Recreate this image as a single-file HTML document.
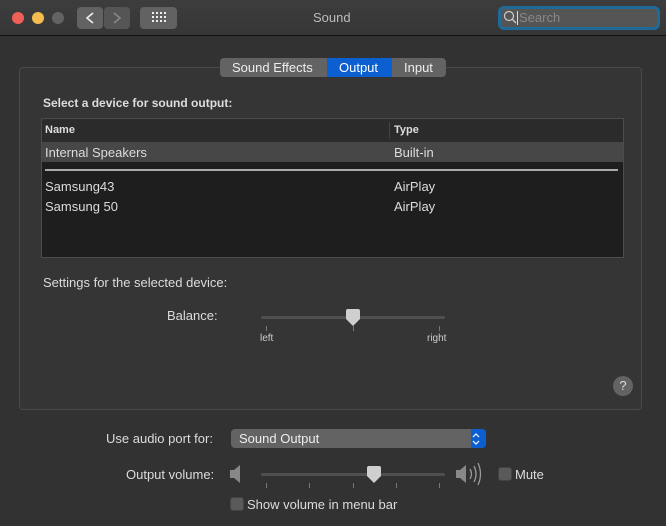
<!DOCTYPE html>
<html><head><style>
*{margin:0;padding:0;box-sizing:border-box}
body{width:666px;height:526px;background:#323232;font-family:"Liberation Sans",sans-serif;color:#dcdcdc;font-size:13px;position:relative;overflow:hidden}
.a{position:absolute;white-space:nowrap}
.tl{width:12px;height:12px;border-radius:50%;top:12px}
.btn{background:#626262;border-radius:4px}
.tick{position:absolute;width:1px;height:5px;background:#777}
.cb{width:14px;height:14px;border-radius:3px;background:#5a5a5a;border:1px solid #444}
</style></head><body>
<div class="a" style="left:0;top:0;width:666px;height:36px;background:linear-gradient(#3d3d3d,#363636);border-bottom:1px solid #111"></div>
<div class="a tl" style="left:12px;background:#ed5f57"></div>
<div class="a tl" style="left:32px;background:#f5bd4f"></div>
<div class="a tl" style="left:52px;background:#636363"></div>
<div class="a btn" style="left:77px;top:7px;width:26px;height:22px"></div>
<div class="a btn" style="left:104px;top:7px;width:26px;height:22px;background:#555"></div>
<svg class="a" style="left:77px;top:7px" width="53" height="22"><path d="M16 6 L10 11 L16 16" stroke="#eee" stroke-width="1.6" fill="none"/><path d="M37 6 L43 11 L37 16" stroke="#888" stroke-width="1.6" fill="none"/></svg>
<div class="a btn" style="left:140px;top:7px;width:37px;height:22px"></div>
<svg class="a" style="left:152px;top:12px" width="14" height="12" fill="#eee"><rect x="0" y="0" width="2" height="2"/><rect x="4" y="0" width="2" height="2"/><rect x="8" y="0" width="2" height="2"/><rect x="12" y="0" width="2" height="2"/><rect x="0" y="4" width="2" height="2"/><rect x="4" y="4" width="2" height="2"/><rect x="8" y="4" width="2" height="2"/><rect x="12" y="4" width="2" height="2"/><rect x="0" y="8" width="2" height="2"/><rect x="4" y="8" width="2" height="2"/><rect x="8" y="8" width="2" height="2"/><rect x="12" y="8" width="2" height="2"/></svg>
<div class="a" style="left:313px;top:10px;color:#bdbdbd">Sound</div>
<div class="a" style="left:498px;top:6px;width:162px;height:24px;border:3px solid #1f6a96;border-radius:6px;background:#555"></div>
<svg class="a" style="left:503px;top:10px" width="14" height="14"><circle cx="6" cy="6" r="4.5" stroke="#ccc" stroke-width="1.2" fill="none"/><path d="M9.5 9.5 L13 13" stroke="#ccc" stroke-width="1.3"/></svg>
<div class="a" style="left:517px;top:11px;width:1px;height:14px;background:#ddd"></div>
<div class="a" style="left:519px;top:10px;color:#888">Search</div>

<div class="a" style="left:19px;top:67px;width:623px;height:343px;border:1px solid #4a4a4a;border-radius:4px;background:#353535"></div>
<div class="a" style="left:220px;top:58px;width:226px;height:19px;border-radius:4px;background:#636363;overflow:hidden">
<div class="a" style="left:107px;top:0;width:65px;height:19px;background:#0b5fd0"></div>
<div class="a" style="left:12px;top:2px;color:#eee">Sound Effects</div>
<div class="a" style="left:119px;top:2px;color:#fff">Output</div>
<div class="a" style="left:184px;top:2px;color:#eee">Input</div>
</div>
<div class="a" style="left:43px;top:96px;font-weight:bold;font-size:12px;color:#ddd">Select a device for sound output:</div>
<div class="a" style="left:41px;top:118px;width:583px;height:140px;border:1px solid #4c4c4c;background:#1e1e1e"></div>
<div class="a" style="left:42px;top:119px;width:581px;height:23px;background:#2b2b2b"></div>
<div class="a" style="left:389px;top:122px;width:1px;height:17px;background:#444"></div>
<div class="a" style="left:45px;top:124px;font-size:11px;font-weight:bold;color:#ddd">Name</div>
<div class="a" style="left:394px;top:124px;font-size:11px;font-weight:bold;color:#ddd">Type</div>
<div class="a" style="left:42px;top:142px;width:581px;height:20px;background:#474747"></div>
<div class="a" style="left:45px;top:145px">Internal Speakers</div>
<div class="a" style="left:394px;top:145px">Built-in</div>
<div class="a" style="left:45px;top:169px;width:573px;height:2px;background:#aaa"></div>
<div class="a" style="left:45px;top:179px">Samsung43</div>
<div class="a" style="left:394px;top:179px">AirPlay</div>
<div class="a" style="left:45px;top:199px">Samsung 50</div>
<div class="a" style="left:394px;top:199px">AirPlay</div>

<div class="a" style="left:43px;top:275px">Settings for the selected device:</div>
<div class="a" style="left:167px;top:308px">Balance:</div>
<div class="a" style="left:261px;top:316px;width:184px;height:3px;border-radius:2px;background:#4f4f4f"></div>
<div class="tick" style="left:266px;top:326px"></div><div class="tick" style="left:353px;top:326px"></div><div class="tick" style="left:439px;top:326px"></div>
<svg class="a" style="left:345px;top:309px" width="16" height="18"><path d="M1 2 Q1 0 3 0 H13 Q15 0 15 2 V10 L8 17 L1 10 Z" fill="#cfcfcf"/></svg>
<div class="a" style="left:260px;top:333px;font-size:10px;color:#ccc">left</div>
<div class="a" style="left:427px;top:333px;font-size:10px;color:#ccc">right</div>
<div class="a" style="left:613px;top:376px;width:20px;height:20px;border-radius:50%;background:#636363;color:#ddd;text-align:center;line-height:20px;font-size:13px">?</div>

<div class="a" style="left:106px;top:431px">Use audio port for:</div>
<div class="a" style="left:231px;top:429px;width:255px;height:19px;border-radius:4px;background:#636363;overflow:hidden"><div class="a" style="left:240px;top:0;width:15px;height:19px;background:#0b5fd0"></div></div>
<svg class="a" style="left:471px;top:431px" width="10" height="16"><path d="M2 6 L5 3 L8 6 M2 10 L5 13 L8 10" stroke="#fff" stroke-width="1.2" fill="none"/></svg>
<div class="a" style="left:239px;top:431px;color:#eee">Sound Output</div>
<div class="a" style="left:126px;top:467px">Output volume:</div>
<svg class="a" style="left:229px;top:464px" width="14" height="20"><path d="M1 6 H5 L11 1 V19 L5 14 H1 Z" fill="#888"/></svg>
<div class="a" style="left:261px;top:473px;width:184px;height:3px;border-radius:2px;background:#4f4f4f"></div>
<div class="tick" style="left:266px;top:483px"></div><div class="tick" style="left:309px;top:483px"></div><div class="tick" style="left:353px;top:483px"></div><div class="tick" style="left:396px;top:483px"></div><div class="tick" style="left:439px;top:483px"></div>
<svg class="a" style="left:366px;top:466px" width="16" height="18"><path d="M1 2 Q1 0 3 0 H13 Q15 0 15 2 V10 L8 17 L1 10 Z" fill="#cfcfcf"/></svg>
<svg class="a" style="left:455px;top:461px" width="34" height="26"><path d="M1 9 H5 L11 4 V22 L5 17 H1 Z" fill="#888"/><path d="M15 8 Q18 13 15 18 M19 5 Q23 13 19 21 M23 2 Q28 13 23 24" stroke="#999" stroke-width="1.3" fill="none"/></svg>
<div class="a cb" style="left:498px;top:467px"></div>
<div class="a" style="left:515px;top:467px">Mute</div>
<div class="a cb" style="left:230px;top:497px"></div>
<div class="a" style="left:247px;top:497px">Show volume in menu bar</div>
</body></html>
